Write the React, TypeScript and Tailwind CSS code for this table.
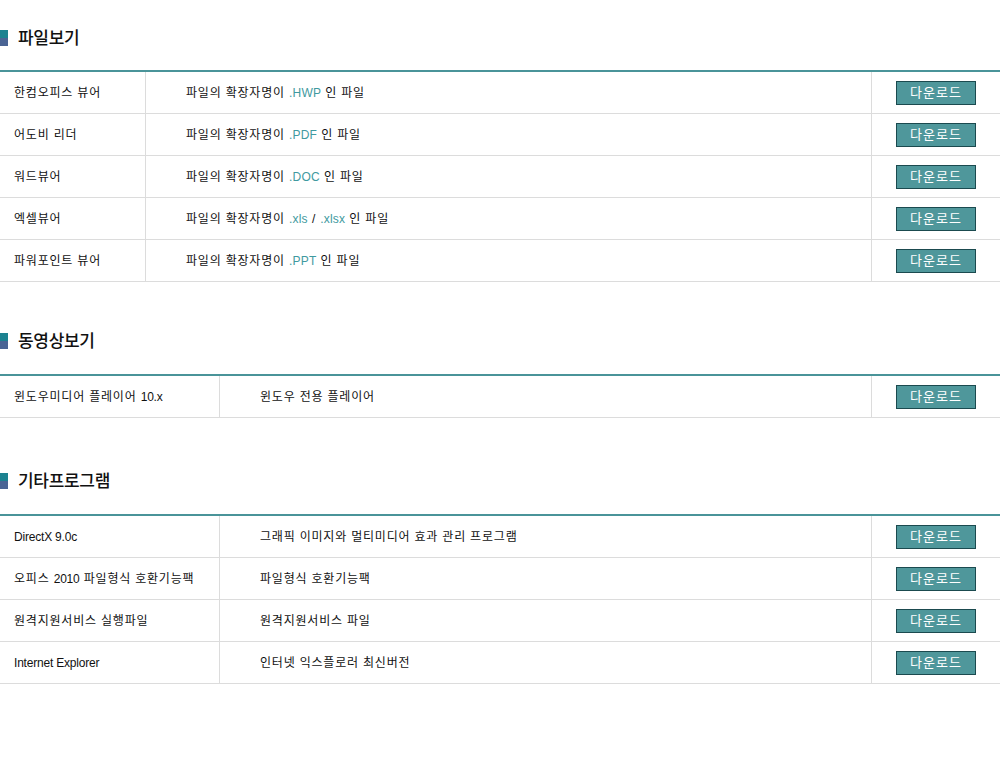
import React from 'react';

type Row = {
  name: string;
  desc: React.ReactNode;
};

function Txt({ children }: { children: string }) {
  const parts = children.split(/([A-Za-z0-9.][A-Za-z0-9. ]*[A-Za-z0-9.]|[A-Za-z0-9.])/g);
  return (
    <>
      {parts.map((p, i) =>
        i % 2 === 1 ? (
          <span key={i} className="tracking-[-0.2px]">{p}</span>
        ) : (
          <React.Fragment key={i}>{p}</React.Fragment>
        )
      )}
    </>
  );
}

const Ext = ({ children }: { children: string }) => (
  <span className="text-[#3f9aa0] tracking-[0.2px]">{children}</span>
);

const fileRows: Row[] = [
  { name: '한컴오피스 뷰어', desc: <>파일의 확장자명이 <Ext>.HWP</Ext> 인 파일</> },
  { name: '어도비 리더', desc: <>파일의 확장자명이 <Ext>.PDF</Ext> 인 파일</> },
  { name: '워드뷰어', desc: <>파일의 확장자명이 <Ext>.DOC</Ext> 인 파일</> },
  { name: '엑셀뷰어', desc: <>파일의 확장자명이 <Ext>.xls</Ext> / <Ext>.xlsx</Ext> 인 파일</> },
  { name: '파워포인트 뷰어', desc: <>파일의 확장자명이 <Ext>.PPT</Ext> 인 파일</> },
];

const videoRows: Row[] = [
  { name: '윈도우미디어 플레이어 10.x', desc: '윈도우 전용 플레이어' },
];

const etcRows: Row[] = [
  { name: 'DirectX 9.0c', desc: '그래픽 이미지와 멀티미디어 효과 관리 프로그램' },
  { name: '오피스 2010 파일형식 호환기능팩', desc: '파일형식 호환기능팩' },
  { name: '원격지원서비스 실행파일', desc: '원격지원서비스 파일' },
  { name: 'Internet Explorer', desc: '인터넷 익스플로러 최신버전' },
];

function Heading({ title }: { title: string }) {
  return (
    <div className="flex items-center h-4">
      <span className="w-2 h-4 bg-gradient-to-b from-[#1c8290] from-50% to-[#4a6494] to-50%" />
      <h2 className="ml-[10px] text-[17px] font-medium text-[#111] leading-none tracking-[-0.3px]">{title}</h2>
    </div>
  );
}

function DownloadTable({ rows, firstCol }: { rows: Row[]; firstCol: string }) {
  return (
    <div className="border-t-2 border-[#4a9499]">
      {rows.map((row) => (
        <div key={row.name} className="flex h-[42px] border-b border-[#dcdcdc] text-[12px] text-[#111] tracking-[0.8px]">
          <div className={`${firstCol} shrink-0 flex items-center pl-[14px] border-r border-[#dcdcdc]`}>
            <span><Txt>{row.name}</Txt></span>
          </div>
          <div className="flex-1 flex items-center pl-10 border-r border-[#dcdcdc]">
            <span>{typeof row.desc === 'string' ? <Txt>{row.desc}</Txt> : row.desc}</span>
          </div>
          <div className="w-[128px] shrink-0 flex items-center justify-center">
            <button className="w-20 h-6 bg-[#4f979b] border border-[#1b4a4f] text-white text-[13px] leading-none tracking-[1px]">
              다운로드
            </button>
          </div>
        </div>
      ))}
    </div>
  );
}

export default function App() {
  return (
    <div
      className="w-[1000px] min-h-[757px] bg-white"
      style={{ fontFamily: '"Liberation Sans", "Noto Sans CJK KR", sans-serif' }}
    >
      <section className="pt-[30px]">
        <Heading title="파일보기" />
        <div className="mt-6">
          <DownloadTable rows={fileRows} firstCol="w-[146px]" />
        </div>
      </section>

      <section className="mt-[51px]">
        <Heading title="동영상보기" />
        <div className="mt-[25px]">
          <DownloadTable rows={videoRows} firstCol="w-[220px]" />
        </div>
      </section>

      <section className="mt-[55px]">
        <Heading title="기타프로그램" />
        <div className="mt-[25px]">
          <DownloadTable rows={etcRows} firstCol="w-[220px]" />
        </div>
      </section>
    </div>
  );
}
